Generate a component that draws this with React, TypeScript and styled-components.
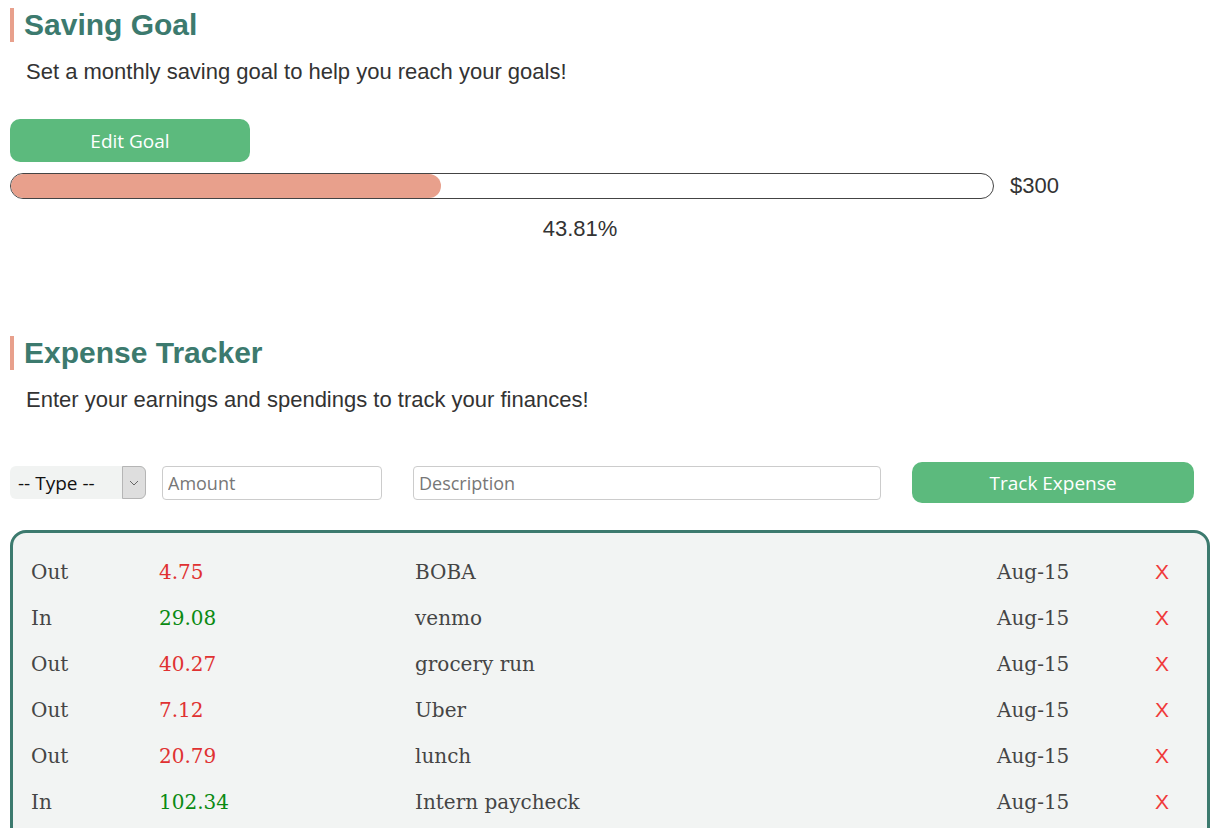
import React from 'react';
import styled, { createGlobalStyle } from 'styled-components';

const GlobalStyle = createGlobalStyle`
  body {
    margin: 0;
    background: #ffffff;
    font-family: "Liberation Sans", Arial, sans-serif;
    color: #333333;
  }
`;

const Page = styled.div`
  padding: 8px 9px 0 10px;
`;

const Section = styled.section<{ $gap?: number }>`
  margin-top: ${(p) => p.$gap ?? 0}px;
`;

const Heading = styled.h2`
  margin: 0;
  border-left: 4px solid #e8a08c;
  padding-left: 10px;
  font-size: 30px;
  line-height: 34px;
  font-weight: bold;
  color: #3c7a6e;
`;

const Blurb = styled.p`
  margin: 17px 0 0 16px;
  font-size: 22px;
  line-height: 26px;
  color: #333333;
`;

const GreenButton = styled.button<{ $width: number; $height: number }>`
  width: ${(p) => p.$width}px;
  height: ${(p) => p.$height}px;
  border: none;
  border-radius: 10px;
  background: #5cba7d;
  color: #ffffff;
  font-family: "Open Sans", "Noto Sans", sans-serif;
  font-size: 19px;
  cursor: pointer;
`;

const GoalButtonRow = styled.div`
  margin-top: 34px;
`;

const ProgressRow = styled.div`
  display: flex;
  align-items: center;
  margin-top: 11px;
`;

const Track = styled.div`
  width: 984px;
  height: 26px;
  box-sizing: border-box;
  border: 1px solid #444444;
  border-radius: 13px;
  overflow: hidden;
  background: #ffffff;
`;

const Fill = styled.div`
  height: 100%;
  background: #e8a08c;
  border-radius: 13px;
`;

const GoalAmount = styled.span`
  margin-left: 16px;
  font-size: 22px;
`;

const Percent = styled.div`
  width: 1140px;
  margin-top: 17px;
  text-align: center;
  font-size: 22px;
  line-height: 26px;
`;

const FormRow = styled.div`
  display: flex;
  align-items: center;
  margin-top: 49px;
`;

const SelectBox = styled.div`
  display: flex;
  width: 136px;
  height: 33px;
  border-radius: 6px;
  background: #f1f3f2;
`;

const Select = styled.select`
  flex: 1;
  min-width: 0;
  appearance: none;
  border: none;
  background: transparent;
  padding: 0 0 0 8px;
  font-family: "Open Sans", "Noto Sans", sans-serif;
  font-size: 19px;
  color: #111111;
  outline: none;
`;

const ArrowBox = styled.span`
  display: flex;
  align-items: center;
  justify-content: center;
  width: 24px;
  box-sizing: border-box;
  border: 1px solid #b5b5b5;
  border-radius: 0 6px 6px 0;
  background: #dedede;
`;

const Field = styled.input<{ $width: number }>`
  width: ${(p) => p.$width}px;
  height: 34px;
  box-sizing: border-box;
  margin: 0 15px 0 16px;
  border: 1px solid #cccccc;
  border-radius: 4px;
  padding: 0 5px;
  font-family: "Open Sans", "Noto Sans", sans-serif;
  font-size: 18px;
  color: #222222;

  &::placeholder {
    color: #777777;
  }
`;

const TrackButtonWrap = styled.div`
  margin-left: 16px;
`;

const Ledger = styled.div`
  margin-top: 27px;
  width: 1200px;
  box-sizing: border-box;
  border: 3px solid #3c7a6e;
  border-radius: 16px;
  background: #f2f4f3;
  padding: 16px 0 16px 18px;
`;

const Row = styled.div`
  display: grid;
  grid-template-columns: 128px 256px 582px 158px auto;
  height: 46px;
  align-items: center;
  font-family: "DejaVu Serif", Georgia, serif;
  font-size: 20px;
  color: #454545;
`;

const Amount = styled.span<{ $in: boolean }>`
  color: ${(p) => (p.$in ? '#0a8a12' : '#e03131')};
`;

const Remove = styled.span`
  font-family: "Liberation Sans", Arial, sans-serif;
  font-size: 21px;
  color: #f03a3a;
  cursor: pointer;
`;

const entries = [
  { type: 'Out', amount: '4.75', desc: 'BOBA', date: 'Aug-15' },
  { type: 'In', amount: '29.08', desc: 'venmo', date: 'Aug-15' },
  { type: 'Out', amount: '40.27', desc: 'grocery run', date: 'Aug-15' },
  { type: 'Out', amount: '7.12', desc: 'Uber', date: 'Aug-15' },
  { type: 'Out', amount: '20.79', desc: 'lunch', date: 'Aug-15' },
  { type: 'In', amount: '102.34', desc: 'Intern paycheck', date: 'Aug-15' },
];

const progress = 43.81;

const App = () => {
  return (
    <Page>
      <GlobalStyle />
      <Section>
        <Heading>Saving Goal</Heading>
        <Blurb>Set a monthly saving goal to help you reach your goals!</Blurb>
        <GoalButtonRow>
          <GreenButton $width={240} $height={43}>Edit Goal</GreenButton>
        </GoalButtonRow>
        <ProgressRow>
          <Track>
            <Fill style={{ width: `${progress}%` }} />
          </Track>
          <GoalAmount>$300</GoalAmount>
        </ProgressRow>
        <Percent>{progress}%</Percent>
      </Section>

      <Section $gap={94}>
        <Heading>Expense Tracker</Heading>
        <Blurb>Enter your earnings and spendings to track your finances!</Blurb>
        <FormRow>
          <SelectBox>
            <Select defaultValue="">
              <option value="">-- Type --</option>
              <option value="in">In</option>
              <option value="out">Out</option>
            </Select>
            <ArrowBox>
              <svg width="10" height="6" viewBox="0 0 10 6">
                <path d="M1 1 L5 5 L9 1" fill="none" stroke="#666" strokeWidth="1" />
              </svg>
            </ArrowBox>
          </SelectBox>
          <Field $width={220} placeholder="Amount" />
          <Field $width={468} placeholder="Description" />
          <TrackButtonWrap>
            <GreenButton $width={282} $height={41}>Track Expense</GreenButton>
          </TrackButtonWrap>
        </FormRow>
        <Ledger>
          {entries.map((e, i) => (
            <Row key={i}>
              <span>{e.type}</span>
              <Amount $in={e.type === 'In'}>{e.amount}</Amount>
              <span>{e.desc}</span>
              <span>{e.date}</span>
              <Remove>X</Remove>
            </Row>
          ))}
        </Ledger>
      </Section>
    </Page>
  );
};

export default App;
